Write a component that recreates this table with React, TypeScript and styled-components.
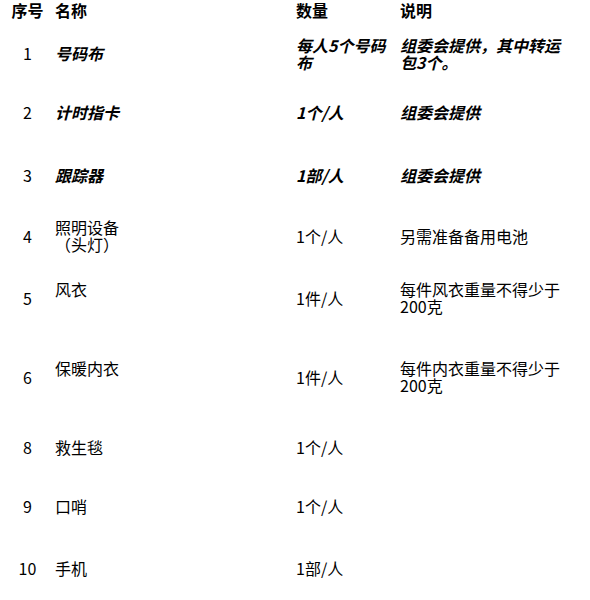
import styled, { createGlobalStyle } from "styled-components";

const GlobalStyle = createGlobalStyle`
  html, body {
    margin: 0;
    padding: 0;
    background: #ffffff;
  }

  body {
    font-family: "Noto Sans CJK SC", "Noto Sans", sans-serif;
    font-size: 16px;
    color: #000000;
  }
`;

const Table = styled.div`
  width: 590px;
  display: flex;
  flex-direction: column;
`;

const Row = styled.div<{ $h: number; $head?: boolean; $em?: boolean }>`
  display: grid;
  grid-template-columns: 55px 241px 104px 170px;
  align-items: center;
  height: ${(p) => p.$h}px;
  line-height: 17px;
  font-weight: ${(p) => (p.$head || p.$em ? 700 : 400)};
`;

const NumCell = styled.div`
  text-align: center;
  font-style: normal;
`;

const Cell = styled.div<{ $em?: boolean; $top?: boolean }>`
  padding-right: 4px;
  font-style: ${(p) => (p.$em ? "italic" : "normal")};
  margin-bottom: ${(p) => (p.$top ? "17px" : "0")};
`;

const HeadNum = styled.div`
  text-align: center;
`;

type Item = {
  no: string;
  name: string[];
  qty: string;
  note: string;
  h: number;
  em?: boolean;
  top?: boolean;
};

const items: Item[] = [
  { no: "1", name: ["号码布"], qty: "每人5个号码布", note: "组委会提供，其中转运包3个。", h: 67, em: true },
  { no: "2", name: ["计时指卡"], qty: "1个/人", note: "组委会提供", h: 50, em: true },
  { no: "3", name: ["跟踪器"], qty: "1部/人", note: "组委会提供", h: 76, em: true },
  { no: "4", name: ["照明设备", "（头灯）"], qty: "1个/人", note: "另需准备备用电池", h: 46 },
  { no: "5", name: ["风衣"], qty: "1件/人", note: "每件风衣重量不得少于200克", h: 78, top: true },
  { no: "6", name: ["保暖内衣"], qty: "1件/人", note: "每件内衣重量不得少于200克", h: 80, top: true },
  { no: "8", name: ["救生毯"], qty: "1个/人", note: "", h: 60 },
  { no: "9", name: ["口哨"], qty: "1个/人", note: "", h: 58 },
  { no: "10", name: ["手机"], qty: "1部/人", note: "", h: 66 },
];

const App = () => {
  return (
    <>
      <GlobalStyle />
      <Table>
        <Row $h={20} $head>
          <HeadNum>序号</HeadNum>
          <Cell>名称</Cell>
          <Cell>数量</Cell>
          <Cell>说明</Cell>
        </Row>
        {items.map((it) => (
          <Row key={it.no} $h={it.h} $em={it.em}>
            <NumCell style={{ fontWeight: 400 }}>{it.no}</NumCell>
            <Cell $em={it.em} $top={it.top}>
              {it.name.map((line) => (
                <div key={line}>{line}</div>
              ))}
            </Cell>
            <Cell $em={it.em}>{it.qty}</Cell>
            <Cell $em={it.em}>{it.note}</Cell>
          </Row>
        ))}
      </Table>
    </>
  );
};

export default App;
